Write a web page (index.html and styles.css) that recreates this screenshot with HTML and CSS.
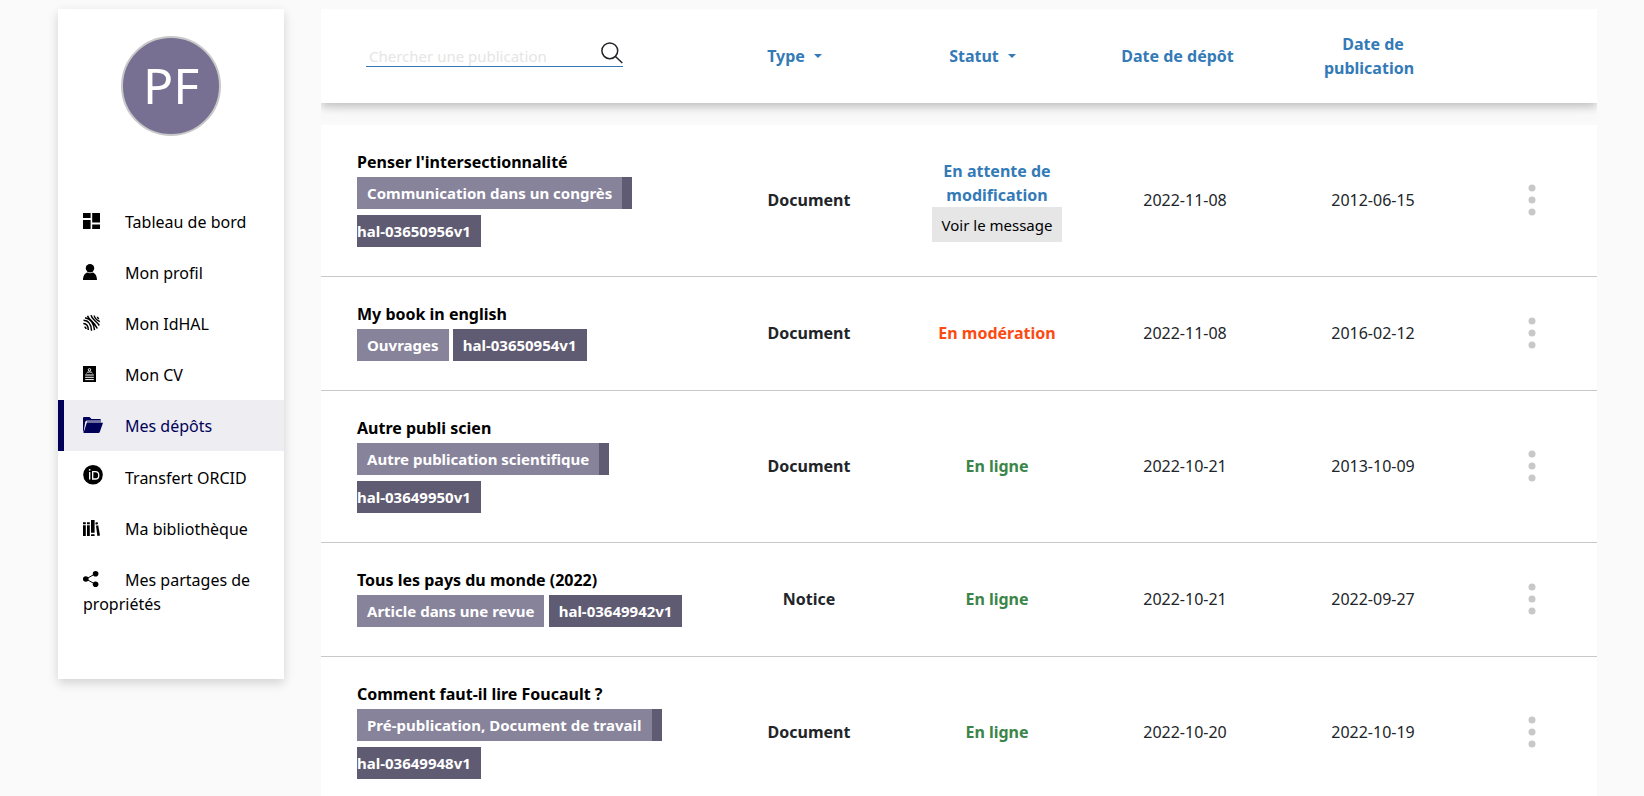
FILE: index.html
```
<!DOCTYPE html>
<html lang="fr">
<head>
<meta charset="utf-8">
<meta name="viewport" content="width=device-width, initial-scale=1">
<title>Mes dépôts</title>
<link rel="stylesheet" href="styles.css">
</head>
<body>
<svg class="sprite" aria-hidden="true">
  <symbol id="dots" viewBox="0 0 8 32"><circle cx="4" cy="4" r="3.5"/><circle cx="4" cy="16" r="3.5"/><circle cx="4" cy="28" r="3.5"/></symbol>
</svg>
<div class="page">
  <aside class="sidebar">
    <div class="avatar">PF</div>
    <nav class="menu">
      <a class="item" href="#"><svg class="icon" viewBox="0 0 20 16"><path d="M0 0h7.6v5H0zM0 7h7.6v9H0zM9.2 0H17v9.6H9.2zM9.2 11.6H17V16H9.2z"/></svg>Tableau de bord</a>
      <a class="item" href="#"><svg class="icon" viewBox="0 0 20 16"><circle cx="7" cy="4.2" r="4.2"/><path d="M0 16c0-4 1.8-7 4.4-7.600 1.600 1 3.600 1 5.200 0C12.200 9 14 12 14 16z"/></svg>Mon profil</a>
      <a class="item" href="#"><svg class="icon line" viewBox="0 0 20 16"><path d="M.3 8.500c3.200.2 5 2.300 5 6.500M.5 5.300c5 .2 7.700 3.500 8 10.500M2 2.800c5.500.8 8.700 5 9.500 12.400M4.500.8c1.500 4.700 7 6 9.800 12.700M8 .2c.8 4.500 5.500 5.500 8.300 10.300M11.200.5c.3 3 2.600 4.600 5.600 6.200M14.300 1.800c.1 1 .6 1.600 1.700 2.100M1.500 12c1 .2 1.500.8 1.600 2"/></svg>Mon IdHAL</a>
      <a class="item" href="#"><svg class="icon" viewBox="0 0 20 16"><path d="M0 0h13v16H0z"/><path class="cut" d="M3.500 7.200c.3-1.700 5.700-1.700 6 0M2.200 9h8.600M2.200 11.300h8.600M2.200 13.600h8.600"/><circle class="cut" cx="6.500" cy="3.800" r="1.200"/></svg>Mon CV</a>
      <a class="item active" href="#" aria-current="page"><svg class="icon" viewBox="0 0 20 16"><path d="M0 16V1.200Q0 0 1 0h5.500l2 2H17q1 0 1 1.500H4Q2.600 3.500 2.200 5L.8 13.500z"/><path d="M3.800 5.800H20L16.800 15q-.4 1-1.400 1H.5z"/><path class="teeth" d="M4.500 4.700h14"/></svg>Mes dépôts</a>
      <a class="item" href="#"><svg class="icon round" viewBox="0 0 20 20"><circle cx="10" cy="9.800" r="9.800"/><path class="cut bold" d="M6.700 7v7.500M9.700 6.700v7.300h2.600c2 0 3.500-1.500 3.500-3.600s-1.500-3.700-3.500-3.700z"/><circle class="hole" cx="6.700" cy="4.800" r=".9"/></svg>Transfert ORCID</a>
      <a class="item" href="#"><svg class="icon" viewBox="0 0 20 16"><path d="M0 2.300h2.800v2H0zM0 5.300h2.800V16H0zM4 2.300h2.800v2H4zM4 5.300h2.800V16H4zM8 0h3.600v12.800H8zM8 14.300h3.600V16H8zM12.300 2.700l2.200-.6.500 2-2.200.6zM13 5.700l2.200-.4L17 15.400l-2.600.6z"/></svg>Ma bibliothèque</a>
      <a class="item" href="#"><svg class="icon" viewBox="0 0 20 16"><path class="link" d="M12.500 2.700L3 8l9.500 5.300"/><circle cx="2.800" cy="8" r="2.800"/><circle cx="12.600" cy="2.800" r="2.800"/><circle cx="12.600" cy="13.200" r="2.800"/></svg>Mes partages de propriétés</a>
    </nav>
  </aside>
  <main class="content">
    <table class="deposits">
      <thead class="head">
        <tr class="row">
          <th class="cell search-cell">
            <form class="search">
              <input class="query" type="text" placeholder="Chercher une publication" aria-label="Chercher une publication">
              <button class="go" type="button" aria-label="Rechercher"><svg viewBox="0 0 22 22" width="22" height="22"><circle cx="8.800" cy="8.800" r="7.900"/><path d="M14.500 14.500l6.800 6.500"/></svg></button>
            </form>
          </th>
          <th class="cell filter"><button class="sort" type="button">Type<span class="caret"></span></button></th>
          <th class="cell filter"><button class="sort" type="button">Statut<span class="caret"></span></button></th>
          <th class="cell deposit-date"><a class="sort" href="#">Date de dépôt</a></th>
          <th class="cell"><a class="sort trailing" href="#">Date de publication</a></th>
          <th class="cell"></th>
        </tr>
      </thead>
      <tbody class="body">
        <tr class="row">
          <td class="cell publication"><a class="title" href="#">Penser l'intersectionnalité</a><div class="tags"><span class="tag">Communication dans un congrès</span><span class="tag id"><wbr><span class="ref">hal-03650956v1</span></span></div></td>
          <td class="cell type">Document</td>
          <td class="cell status pending"><span>En attente de modification</span><button class="message" type="button">Voir le message</button></td>
          <td class="cell">2022-11-08</td>
          <td class="cell">2012-06-15</td>
          <td class="cell"><button class="more" type="button" aria-label="Actions"><svg width="8" height="32"><use href="#dots"/></svg></button></td>
        </tr>
        <tr class="row">
          <td class="cell publication"><a class="title" href="#">My book in english</a><div class="tags"><span class="tag">Ouvrages</span> <span class="tag id"><span class="ref">hal-03650954v1</span></span></div></td>
          <td class="cell type">Document</td>
          <td class="cell status moderation">En modération</td>
          <td class="cell">2022-11-08</td>
          <td class="cell">2016-02-12</td>
          <td class="cell"><button class="more" type="button" aria-label="Actions"><svg width="8" height="32"><use href="#dots"/></svg></button></td>
        </tr>
        <tr class="row">
          <td class="cell publication"><a class="title" href="#">Autre publi scien</a><div class="tags"><span class="tag">Autre publication scientifique</span><span class="tag id"><wbr><span class="ref">hal-03649950v1</span></span></div></td>
          <td class="cell type">Document</td>
          <td class="cell status online">En ligne</td>
          <td class="cell">2022-10-21</td>
          <td class="cell">2013-10-09</td>
          <td class="cell"><button class="more" type="button" aria-label="Actions"><svg width="8" height="32"><use href="#dots"/></svg></button></td>
        </tr>
        <tr class="row">
          <td class="cell publication"><a class="title" href="#">Tous les pays du monde (2022)</a><div class="tags"><span class="tag">Article dans une revue</span> <span class="tag id"><span class="ref">hal-03649942v1</span></span></div></td>
          <td class="cell type">Notice</td>
          <td class="cell status online">En ligne</td>
          <td class="cell">2022-10-21</td>
          <td class="cell">2022-09-27</td>
          <td class="cell"><button class="more" type="button" aria-label="Actions"><svg width="8" height="32"><use href="#dots"/></svg></button></td>
        </tr>
        <tr class="row">
          <td class="cell publication"><a class="title" href="#">Comment faut-il lire Foucault ?</a><div class="tags"><span class="tag">Pré-publication, Document de travail</span><span class="tag id"><wbr><span class="ref">hal-03649948v1</span></span></div></td>
          <td class="cell type">Document</td>
          <td class="cell status online">En ligne</td>
          <td class="cell">2022-10-20</td>
          <td class="cell">2022-10-19</td>
          <td class="cell"><button class="more" type="button" aria-label="Actions"><svg width="8" height="32"><use href="#dots"/></svg></button></td>
        </tr>
      </tbody>
    </table>
  </main>
</div>
</body>
</html>
```
FILE: styles.css
```
* { box-sizing: border-box; }
html { overflow: hidden; }
body {
  margin: 0;
  height: 100vh;
  overflow: hidden;
  background: #fafafa;
  color: #212529;
  font: 16px/24px "Noto Sans", sans-serif;
}
a { color: inherit; text-decoration: none; }
button, input { font: inherit; color: inherit; background: none; border: 0; padding: 0; margin: 0; }
button { cursor: pointer; }
.sprite { display: none; }

.page {
  display: grid;
  grid-template-columns: 226px 1fr;
  column-gap: 37px;
  align-items: start;
  padding: 9px 47px 0 58px;
}

/* Sidebar */
.sidebar {
  padding: 27px 0 50px;
  background: #fff;
  box-shadow: 0 4px 10px rgba(0, 0, 0, .16);
}
.avatar {
  width: 100px;
  height: 100px;
  margin: 0 auto 60px;
  border: 2px solid #c8c8c8;
  border-radius: 50%;
  background: #777093;
  color: #fff;
  font-size: 50px;
  line-height: 94px;
  text-align: center;
}
.item {
  display: block;
  padding: 14px 20px 13px 19px;
  border-left: 6px solid transparent;
  color: #000;
}
.item.active {
  border-color: #000059;
  background: #eeedf2;
  color: #000059;
}
.icon {
  width: 20px;
  height: 16px;
  margin-right: 22px;
  vertical-align: -1px;
  fill: currentColor;
}
.icon.round { height: 20px; }
.line { fill: none; stroke: currentColor; stroke-width: 1.5; }
.cut { fill: none; stroke: #fff; stroke-width: 1; }
.cut.bold { stroke-width: 1.3; }
.hole { fill: #fff; }
.teeth { stroke: currentColor; stroke-width: 2; stroke-dasharray: 1 1; }
.link { fill: none; stroke: currentColor; stroke-width: 1; }

/* Table of deposits */
.content { overflow: hidden; }
.deposits, .head, .body { display: block; }
.row {
  display: grid;
  grid-template-columns: 394fr 188fr 188fr 188fr 188fr 130fr;
}
.head {
  margin-bottom: 22px;
  background: #fff;
  color: #337ab7;
  box-shadow: 0 4px 8px rgba(0, 0, 0, .2), 0 6px 20px rgba(0, 0, 0, .04);
}
.body { position: relative; background: #fff; }
.body .row { border-bottom: 1px solid #c8c8c8; }
.cell {
  display: flex;
  flex-direction: column;
  align-items: center;
  justify-content: center;
  padding: 0 20px 2px;
  text-align: center;
}
.head .cell { padding: 23px 36px; }
.head .search-cell { align-items: flex-start; padding: 0 45px; }
.search {
  display: flex;
  align-items: flex-end;
  width: 257px;
  margin-bottom: 5px;
  border-bottom: 1px solid #337ab7;
}
.query {
  flex: 1;
  min-width: 0;
  height: 20px;
  padding: 0 3px;
  color: #212529;
  font-size: 15px;
  font-weight: 400;
  outline: 0;
}
.query::placeholder { color: #e5e5e5; opacity: 1; }
.go { width: 22px; height: 26px; }
.go svg { display: block; margin: 2px 0; fill: none; stroke: #212529; stroke-width: 1.5; }
.head .filter { padding-right: 65px; }
.head .deposit-date { padding: 23px 30px 23px 15px; }
.sort { font-weight: 700; white-space: nowrap; }
.trailing { white-space: normal; }
.trailing::after { content: ""; display: inline-block; width: 8px; }
.caret {
  display: inline-block;
  margin-left: 9px;
  border: 4px solid transparent;
  border-top-color: currentColor;
  border-bottom: 0;
  vertical-align: 4px;
}

.body .publication {
  align-items: flex-start;
  padding: 25px 15px 26px 36px;
  text-align: left;
}
.title { color: #000; font-weight: 700; }
.tags { line-height: 38px; }
.tag {
  padding: 6px 10px;
  background: #87839b;
  color: #fff;
  font-size: 15px;
  font-weight: 700;
}
.tag.id { background: #5f5b72; }
.ref { white-space: nowrap; }
.type, .status { font-weight: 700; }
.body .pending { padding-bottom: 0; color: #337ab7; }
.moderation { color: #fc4a12; }
.online { color: #3c8548; }
.message {
  height: 35px;
  padding: 0 10px;
  background: #e6e6e6;
  color: #000;
  font-size: 15px;
  font-weight: 400;
  white-space: nowrap;
}
.more { padding: 0 8px; }
.more svg { display: block; fill: #c8c8c8; }
```
